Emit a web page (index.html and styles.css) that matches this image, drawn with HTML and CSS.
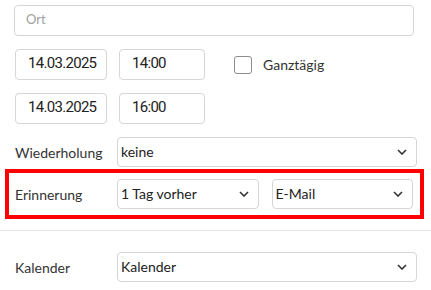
FILE: index.html
```html
<!DOCTYPE html>
<html lang="de">
<head>
  <meta charset="UTF-8">
  <meta name="viewport" content="width=device-width, initial-scale=1.0">
  <title>Termin bearbeiten</title>
  <link rel="stylesheet" href="styles.css">
</head>
<body>
  <div class="form">
    <div class="field-row">
      <div class="input wide placeholder">Ort</div>
    </div>

    <div class="field-row">
      <div class="input date">14.03.2025</div>
      <div class="input time">14:00</div>
      <label class="check">
        <span class="box"></span>
        Ganztägig
      </label>
    </div>

    <div class="field-row">
      <div class="input date">14.03.2025</div>
      <div class="input time">16:00</div>
    </div>

    <div class="field-row labeled">
      <span class="label">Wiederholung</span>
      <div class="select full">
        <span>keine</span>
        <svg class="chev" width="10" height="6" viewBox="0 0 10 6"><path d="M1 1l4 4 4-4" fill="none" stroke="#333" stroke-width="1.6"/></svg>
      </div>
    </div>

    <div class="field-row labeled highlight">
      <span class="label">Erinnerung</span>
      <div class="select half">
        <span>1 Tag vorher</span>
        <svg class="chev" width="10" height="6" viewBox="0 0 10 6"><path d="M1 1l4 4 4-4" fill="none" stroke="#333" stroke-width="1.6"/></svg>
      </div>
      <div class="select half">
        <span>E-Mail</span>
        <svg class="chev" width="10" height="6" viewBox="0 0 10 6"><path d="M1 1l4 4 4-4" fill="none" stroke="#333" stroke-width="1.6"/></svg>
      </div>
    </div>
  </div>

  <hr class="divider">

  <div class="form lower">
    <div class="field-row labeled">
      <span class="label">Kalender</span>
      <div class="select full">
        <span>Kalender</span>
        <svg class="chev" width="10" height="6" viewBox="0 0 10 6"><path d="M1 1l4 4 4-4" fill="none" stroke="#333" stroke-width="1.6"/></svg>
      </div>
    </div>
  </div>
</body>
</html>
```

FILE: styles.css
```css
body {
  margin: 0;
  background: #ffffff;
  color: #333;
  font-family: Lato, "Liberation Sans", sans-serif;
  font-size: 14px;
}
.form {
  padding: 5px 17px 0 14px;
}
.form.lower {
  padding-top: 21px;
}
.field-row {
  display: flex;
  align-items: center;
  gap: 12px;
  margin-bottom: 13px;
}
.input {
  box-sizing: border-box;
  height: 31px;
  border: 1px solid #d6d6d6;
  border-radius: 4px;
  padding: 0 12px 3px 12px;
  display: flex;
  align-items: center;
  font-family: Roboto, sans-serif;
  font-size: 15px;
  letter-spacing: -0.7px;
  color: #222;
}
.input.wide {
  flex: 1;
}
.input.placeholder {
  font-family: Lato, sans-serif;
  font-size: 13px;
  letter-spacing: 0;
  color: #a0a0a0;
  padding-left: 11px;
}
.input.date {
  width: 92px;
  margin-left: 1px;
}
.input.time {
  width: 86px;
}
.check {
  display: flex;
  align-items: center;
  gap: 11px;
  margin-left: 17px;
  color: #333;
}
.check .box {
  width: 18px;
  height: 18px;
  box-sizing: border-box;
  border: 1px solid #8c8c8c;
  border-radius: 3px;
}
.labeled {
  gap: 13px;
  padding-left: 1px;
  margin-bottom: 2px;
}
.label {
  width: 89px;
  flex-shrink: 0;
  color: #333;
}
.select {
  box-sizing: border-box;
  height: 30px;
  border: 1px solid #d6d6d6;
  border-radius: 4px;
  padding: 0 9px 0 3px;
  display: flex;
  align-items: center;
  justify-content: space-between;
  color: #222;
}
.select span {
  margin-top: -2px;
}
.select.full {
  flex: 1;
  margin-right: -3px;
}
.select.half {
  flex: 1;
}
.highlight {
  border: 4px solid #ff0000;
  margin: 0 -10px 0 -9px;
  padding: 6px 7px 6px 6px;
}
.divider {
  border: 0;
  border-top: 1px solid #e6e6e6;
  margin: 11px 0 0 0;
}
```
